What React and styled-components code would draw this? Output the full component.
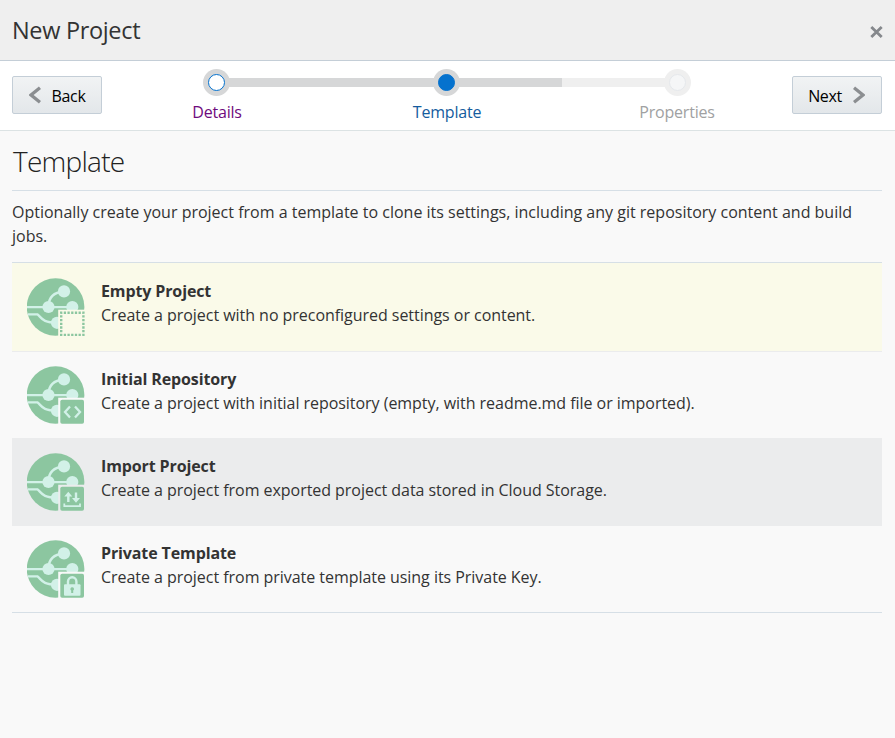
import React from "react";
import styled, { createGlobalStyle } from "styled-components";

const GlobalStyle = createGlobalStyle`
  *, *::before { box-sizing: border-box; }
  body { margin: 0; background: #f9f9f9; }
`;

const Dialog = styled.div`
  height: 738px;
  background: #f9f9f9;
  color: #333;
  font: 16px/24px "Open Sans", "Noto Sans", sans-serif;
  overflow: hidden;
`;

const Header = styled.header`
  height: 61px;
  padding: 0 12px 0 12px;
  display: flex;
  align-items: center;
  justify-content: space-between;
  background: #efefef;
  border-bottom: 1px solid #c4ced7;
`;

const Title = styled.h1`
  margin: 0 0 1px;
  font-size: 23.5px;
  line-height: 32px;
  font-weight: 400;
  letter-spacing: -0.33px;
`;

const CloseButton = styled.button`
  display: flex;
  margin: 4px 0 0;
  padding: 0;
  border: 0;
  background: none;
`;

const Navigation = styled.nav`
  height: 70px;
  padding: 15px 13px 0 12px;
  display: flex;
  justify-content: space-between;
  background: #fff;
  border-bottom: 1px solid #dce3e4;
`;

const NavButton = styled.button`
  width: 90px;
  height: 38px;
  padding: 1px ${(p) => p.$inset}px 0 0;
  display: flex;
  align-items: center;
  justify-content: center;
  gap: 11px;
  border: 1px solid #c4ced7;
  border-radius: 2px;
  background: linear-gradient(#f1f3f4, #e3e7ea);
  color: #000;
  font: inherit;
  letter-spacing: -0.35px;
  svg { flex: none; margin-top: -1px; }
`;

const Train = styled.div`
  width: 590px;
  margin-top: -7px;
`;

const Track = styled.div`
  height: 27px;
  padding-left: 51px;
  display: flex;
  align-items: center;
`;

const Rail = styled.div`
  flex: none;
  height: 9px;
  width: ${(p) => p.$width}px;
  margin-left: ${(p) => (p.$joined ? 0 : -1)}px;
  margin-right: ${(p) => (p.$open ? 0 : -1)}px;
  background: ${(p) => (p.$done ? "#d6d7d8" : "#efefef")};
`;

const Stop = styled.div`
  flex: none;
  width: 27px;
  height: 27px;
  padding: 5px;
  border-radius: 50%;
  background: ${(p) => (p.$state === "pending" ? "#efefef" : "#d6d7d8")};
  &::before {
    content: "";
    display: block;
    width: 17px;
    height: 17px;
    border-radius: 50%;
    border: 1px solid ${(p) => (p.$state === "pending" ? "#e5e8ec" : "#0572ce")};
    background: ${(p) => ({ visited: "#fff", current: "#0572ce", pending: "#f5f6f7" })[p.$state]};
  }
`;

const Labels = styled.div`
  display: grid;
  grid-template-columns: 230px 230px 230px;
  margin: 4px 0 0 -50px;
  text-align: center;
`;

const StepLabel = styled.span`
  color: ${(p) => p.$color};
  letter-spacing: -0.2px;
`;

const Content = styled.main`
  padding: 0 13px 0 12px;
`;

const Heading = styled.h2`
  height: 60px;
  margin: 0;
  padding: 10px 0 0 1px;
  border-bottom: 1px solid #d6dfe6;
  color: #222;
  font-size: 28px;
  line-height: 40px;
  font-weight: 300;
  letter-spacing: -0.75px;
`;

const Intro = styled.p`
  margin: 0;
  padding: 9px 0 14px;
  white-space: nowrap;
`;

const TemplateList = styled.ul`
  margin: 0;
  padding: 0;
  list-style: none;
  border-top: 1px solid #d6dfe6;
`;

const TemplateRow = styled.li`
  height: ${(p) => (p.$first ? 89 : 87)}px;
  padding: ${(p) => (p.$first ? 15 : 14)}px 0 0 15px;
  display: flex;
  gap: 16px;
  background: ${(p) => p.$background};
  background-clip: padding-box;
  border-bottom: 1px solid ${(p) => p.$line};
`;

const RowText = styled.div`
  padding-top: 1px;
`;

const RowName = styled.div`
  font-weight: 700;
  letter-spacing: -0.12px;
`;

const RowDescription = styled.div`
  letter-spacing: -0.04px;
`;

const Chevron = ({ right }) => (
  <svg width="12" height="18" viewBox="0 0 12 18" fill="none" stroke="#8b8e91" strokeWidth="3.4">
    <path d={right ? "M1 1.7 10 9 1 16.3" : "M11 1.7 2 9 11 16.3"} />
  </svg>
);

const badges = {
  empty: (
    <rect x="34.2" y="34.7" width="22.2" height="22.2" fill="none" stroke="#8cc6a0" strokeWidth="2.4" strokeDasharray="2.3 1.4" strokeDashoffset="1.15" />
  ),
  repository: (
    <path d="M43 40.5 38 46 43 51.5M48 40.5 53 46 48 51.5" fill="none" stroke="#d2f1e8" strokeWidth="2.3" />
  ),
  import: (
    <g fill="none" stroke="#d2f1e8" strokeWidth="2">
      <path d="M41.3 49V41M49 39.5V47" strokeWidth="2.4" />
      <path d="M37.3 43.5 41.3 38.8 45.3 43.5ZM45 45 49 49.7 53 45Z" fill="#d2f1e8" stroke="none" />
      <path d="M37.3 50.5V53.2H53V50.5" strokeWidth="1.8" />
    </g>
  ),
  private: (
    <g>
      <path d="M41 46V41.5a4.2 4.2 0 0 1 8.4 0V46" fill="none" stroke="#d2f1e8" strokeWidth="2.4" />
      <rect x="37" y="44.2" width="16.5" height="11.5" rx="1" fill="#d2f1e8" />
      <path d="M45.2 47.2a1.8 1.8 0 0 1 1 3.3V53h-2v-2.5a1.8 1.8 0 0 1 1-3.3Z" fill="#8cc6a0" />
    </g>
  ),
};

const TemplateIcon = ({ kind, gap }) => (
  <svg width="58" height="58" viewBox="0 0 58 58">
    <circle cx="28.6" cy="29" r="28.8" fill="#8cc6a0" />
    <g fill="none" stroke="#d2f1e8" strokeWidth="2.4">
      <path d="M0 29.1H45" />
      <path d="M21.5 29C21.5 19 27 14 37 13.7" />
      <path d="M.8 36.4H10.5C15 40 15 44.6 30 44.7" />
    </g>
    <g fill="#d2f1e8">
      <circle cx="37" cy="13.4" r="6.1" />
      <circle cx="21.5" cy="29" r="6.1" />
      <circle cx="45.3" cy="29" r="6.1" />
      <circle cx="30" cy="44.8" r="6.1" />
    </g>
    <path d="M31.2 31.7H58V58H31.2Z" fill={gap} />
    {kind !== "empty" && <rect x="33.3" y="33.7" width="23.7" height="24" rx="1.8" fill="#8cc6a0" />}
    {badges[kind]}
  </svg>
);

const templates = [
  { kind: "empty", name: "Empty Project", text: "Create a project with no preconfigured settings or content.", background: "#fafae9", line: "#ebeced" },
  { kind: "repository", name: "Initial Repository", text: "Create a project with initial repository (empty, with readme.md file or imported).", background: "#f9f9f9", line: "#ebeced" },
  { kind: "import", name: "Import Project", text: "Create a project from exported project data stored in Cloud Storage.", background: "#ebeced", line: "#ebeced" },
  { kind: "private", name: "Private Template", text: "Create a project from private template using its Private Key.", background: "#f9f9f9", line: "#d6dfe6" },
];

export default function App() {
  return (
    <Dialog>
      <GlobalStyle />
      <Header>
        <Title>New Project</Title>
        <CloseButton aria-label="Close">
          <svg width="13" height="12" viewBox="0 0 13 12" fill="none" stroke="#85888c" strokeWidth="2.8">
            <path d="M1.3 1 11.7 11M11.7 1 1.3 11" />
          </svg>
        </CloseButton>
      </Header>
      <Navigation>
        <NavButton $inset={0}><Chevron />Back</NavButton>
        <Train>
          <Track>
            <Stop $state="visited" />
            <Rail $done $width={205} />
            <Stop $state="current" />
            <Rail $done $open $width={103} />
            <Rail $joined $width={103} />
            <Stop $state="pending" />
          </Track>
          <Labels>
            <StepLabel $color="#6f0a7d">Details</StepLabel>
            <StepLabel $color="#145c9e">Template</StepLabel>
            <StepLabel $color="#a0a1a2">Properties</StepLabel>
          </Labels>
        </Train>
        <NavButton $inset={1}>Next<Chevron right /></NavButton>
      </Navigation>
      <Content>
        <Heading>Template</Heading>
        <Intro>
          Optionally create your project from a template to clone its settings, including any git repository content and build
          <br />
          jobs.
        </Intro>
        <TemplateList>
          {templates.map((item, index) => (
            <TemplateRow key={item.kind} $first={index === 0} $background={item.background} $line={item.line}>
              <TemplateIcon kind={item.kind} gap={item.background} />
              <RowText>
                <RowName>{item.name}</RowName>
                <RowDescription>{item.text}</RowDescription>
              </RowText>
            </TemplateRow>
          ))}
        </TemplateList>
      </Content>
    </Dialog>
  );
}
